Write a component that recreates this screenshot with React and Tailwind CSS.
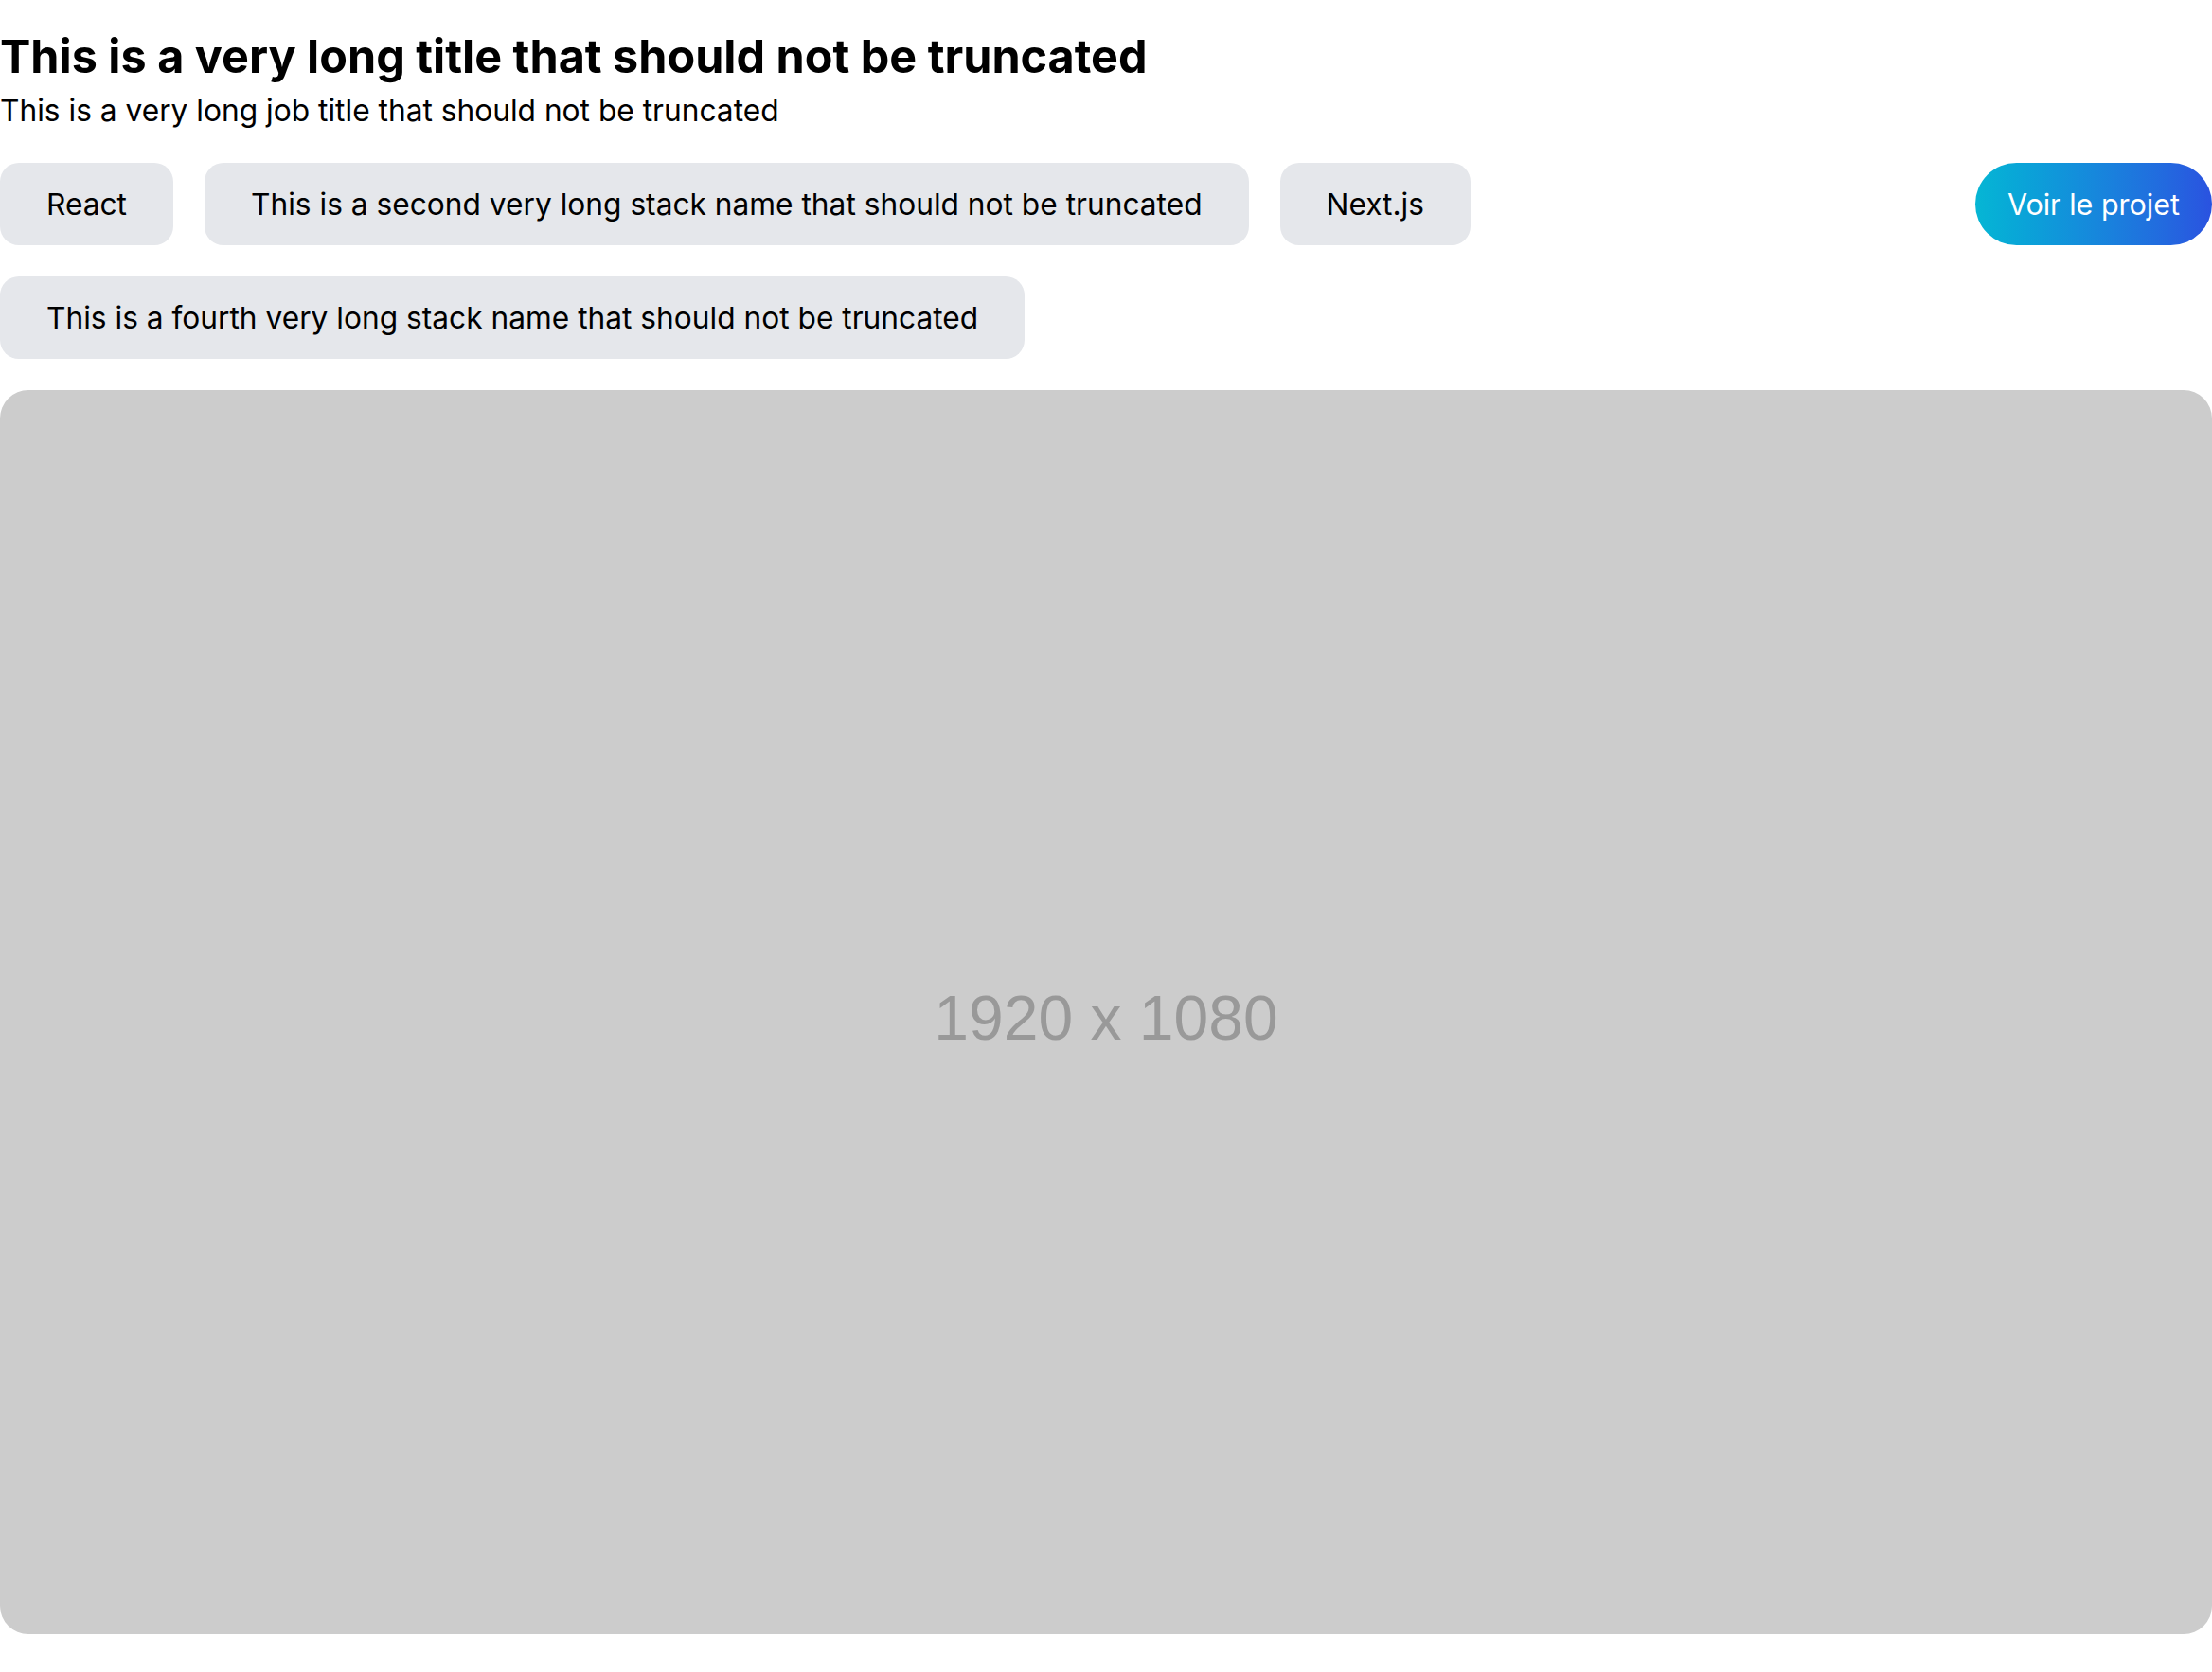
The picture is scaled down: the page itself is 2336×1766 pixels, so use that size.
export default function App() {
  const chips = [
    "React",
    "This is a second very long stack name that should not be truncated",
    "Next.js",
    "This is a fourth very long stack name that should not be truncated",
  ];
  return (
    <div className="w-full bg-white pt-[36px] pb-[41px] font-['Inter',sans-serif] text-black">
      <h1 className="text-[48.5px] font-bold leading-[48px]">
        This is a very long title that should not be truncated
      </h1>
      <p className="mt-[13px] text-[31.7px] leading-[40px]">
        This is a very long job title that should not be truncated
      </p>
      <div className="mt-[35px] flex items-start justify-between gap-[33px]">
        <div className="flex flex-wrap gap-[33px]">
          {chips.map((c) => (
            <span
              key={c}
              className="flex h-[87px] items-center rounded-[20px] bg-[#e5e7eb] px-[49px] text-[31.7px] leading-[40px] whitespace-nowrap"
            >
              {c}
            </span>
          ))}
        </div>
        <a className="flex h-[87px] shrink-0 items-center rounded-full bg-gradient-to-r from-[#06b6d4] to-[#2a52e0] px-[34px] text-[30.5px] leading-[40px] text-white whitespace-nowrap">
          Voir le projet
        </a>
      </div>
      <div className="mt-[33px] flex aspect-video w-full items-center justify-center rounded-[30px] bg-[#cccccc] pt-[12px]">
        <span className="font-['Liberation_Sans',Arial,sans-serif] text-[66px] text-[#999999]">
          1920 x 1080
        </span>
      </div>
    </div>
  );
}
